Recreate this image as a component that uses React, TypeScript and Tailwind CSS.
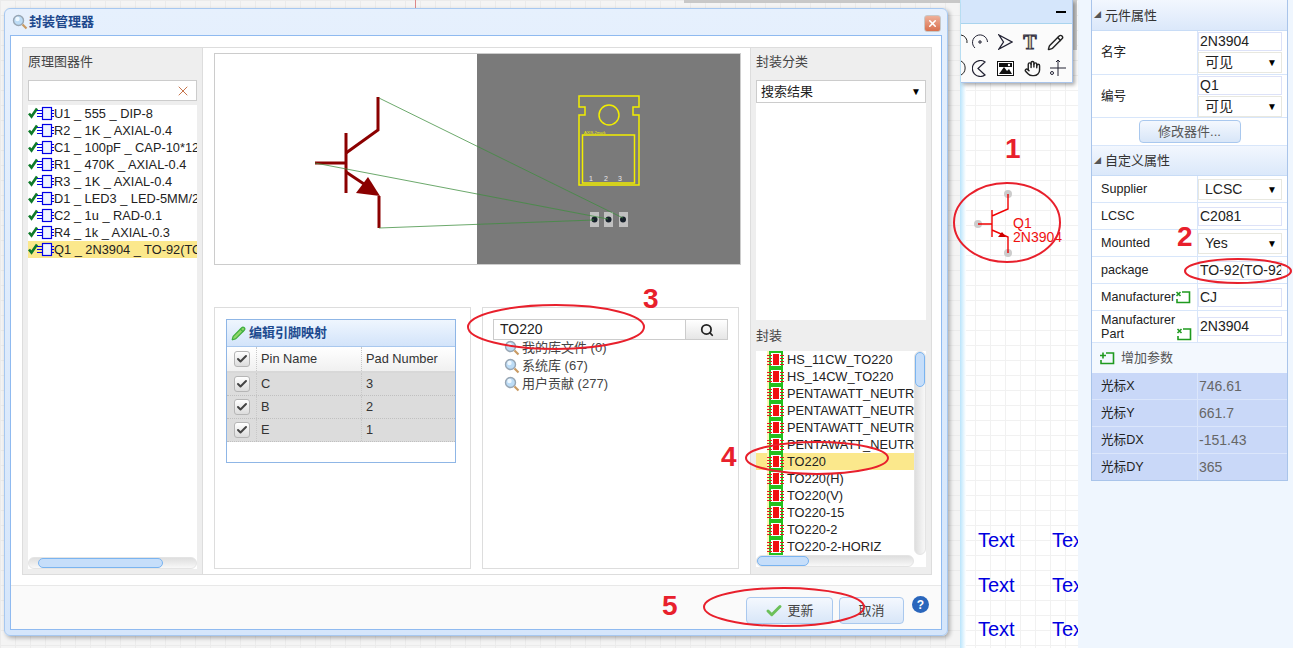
import { Check, Hand, Pencil, Search, X } from "lucide-react";
import type { ReactNode } from "react";

const parts = [
  "U1 _ 555 _ DIP-8",
  "R2 _ 1K _ AXIAL-0.4",
  "C1 _ 100pF _ CAP-10*12",
  "R1 _ 470K _ AXIAL-0.4",
  "R3 _ 1K _ AXIAL-0.4",
  "D1 _ LED3 _ LED-5MM/2",
  "C2 _ 1u _ RAD-0.1",
  "R4 _ 1k _ AXIAL-0.3",
  "Q1 _ 2N3904 _ TO-92(TO-92)",
];

const footprints = [
  "HS_11CW_TO220",
  "HS_14CW_TO220",
  "PENTAWATT_NEUTRAL",
  "PENTAWATT_NEUTRAL",
  "PENTAWATT_NEUTRAL",
  "PENTAWATT_NEUTRAL",
  "TO220",
  "TO220(H)",
  "TO220(V)",
  "TO220-15",
  "TO220-2",
  "TO220-2-HORIZ",
];

const pins = [
  ["C", "3"],
  ["B", "2"],
  ["E", "1"],
];

function PartIcon() {
  return (
    <svg width="26" height="17" viewBox="0 0 26 17" className="shrink-0">
      <path d="M1 8.5l2.5 3L9 3.5" fill="none" stroke="#0f7a2a" strokeWidth="2.6" />
      <rect x="14.5" y="2.5" width="9" height="12" fill="#eef3ff" stroke="#0000e6" strokeWidth="1.2" />
      <path d="M9 5.5h5.5M9 8.5h5.5M9 11.5h5.5M23.5 5.5H26M23.5 8.5H26M23.5 11.5H26" stroke="#0000e6" strokeWidth="1.1" />
    </svg>
  );
}

function ChipIcon() {
  return (
    <svg width="18" height="17" viewBox="0 0 18 17" className="shrink-0">
      <rect x="0" y="0" width="2" height="17" fill="#fdf6b8" />
      <rect x="2" y="0" width="14" height="17" fill="#22c01e" />
      <rect x="4" y="2" width="10" height="13" fill="#fff" />
      <rect x="6" y="3" width="6" height="11" fill="#f01010" />
      <path d="M0 4.5h5M0 7.5h5M0 10.5h5M0 13.5h5M13 4.5h4M13 7.5h4M13 10.5h4M13 13.5h4" stroke="#e02020" />
    </svg>
  );
}

function MagIcon({ size = 16 }: { size?: number }) {
  return (
    <svg width={size} height={size} viewBox="0 0 16 16" className="shrink-0">
      <circle cx="6.5" cy="6.5" r="5" fill="#bcdcf6" stroke="#98a6b4" strokeWidth="1.4" />
      <circle cx="5.5" cy="5" r="2.2" fill="#eef8ff" />
      <path d="M10.5 10.5l4 4" stroke="#c99a62" strokeWidth="2.2" />
    </svg>
  );
}

function AddIcon({ plus }: { plus?: boolean }) {
  return (
    <svg width="16" height="14" viewBox="0 0 16 14" className="shrink-0">
      <path d="M7 2h7.5v10.5H2V9" fill="none" stroke="#1f9a1f" strokeWidth="1.6" />
      {plus ? (
        <path d="M1 4.5h6M4 1.5v6" stroke="#1f9a1f" strokeWidth="1.6" />
      ) : (
        <path d="M1.5 2l4 4M5.5 2l-4 4" stroke="#1f9a1f" strokeWidth="1.6" />
      )}
    </svg>
  );
}

function HScroll({ thumb, className }: { thumb: string; className: string }) {
  return (
    <div className={`h-3 rounded-full bg-gradient-to-b from-[#dedede] to-[#f8f8f8] border border-[#e4e4e4] ${className}`}>
      <div className={`h-full rounded-full bg-[#c6defa] border border-[#7ab4f0] ${thumb}`} />
    </div>
  );
}

function Box() {
  return (
    <div className="w-4 h-4 rounded-[3px] border border-[#b5b5b5] bg-gradient-to-b from-white to-[#dcdcdc] flex items-center justify-center">
      <Check size={12} strokeWidth={4} color="#444" />
    </div>
  );
}

function PropSelect({ label }: { label: string }) {
  return (
    <div className="flex items-center justify-between h-[21px] w-[84px] border border-[#e8e8e0] bg-white pl-[6px] pr-[4px] text-[14px] text-[#222]">
      <span>{label}</span>
      <span className="text-[10px] text-black">▼</span>
    </div>
  );
}

function PropInput({ value }: { value: string }) {
  return (
    <div className="h-[19px] w-[84px] border border-[#dde2f8] bg-white pl-[1px] text-[14px] leading-[17px] text-[#222] overflow-hidden whitespace-nowrap">
      {value}
    </div>
  );
}

function Row({ h, label, children }: { h: string; label: ReactNode; children: ReactNode }) {
  return (
    <div className={`flex border-b border-[#d8e6fa] ${h}`}>
      <div className="w-[106px] border-r border-[#d8e6fa] flex items-center pl-[9px] text-[12.6px] text-[#222] shrink-0">
        {label}
      </div>
      <div className="flex flex-col justify-center gap-[1px]">{children}</div>
    </div>
  );
}

function SectionHead({ title, h }: { title: string; h: string }) {
  return (
    <div className={`flex items-center gap-[4px] pl-[2px] pt-[1px] bg-gradient-to-b from-[#f2f7fe] to-[#dbe8fa] text-[13px] text-[#333] border-b border-[#c8dcf6] ${h}`}>
      <span className="text-[7px] text-[#555]">◢</span>
      {title}
    </div>
  );
}

function PropsPanel() {
  return (
    <aside className="w-[197px] h-[481px] ml-[13px] border border-t-0 border-[#a9c4ea] bg-white shrink-0 overflow-hidden">
      <SectionHead title="元件属性" h="h-[31px]" />
      <Row h="h-[44px]" label="名字">
        <PropInput value="2N3904" />
        <PropSelect label="可见" />
      </Row>
      <Row h="h-[43px]" label="编号">
        <PropInput value="Q1" />
        <PropSelect label="可见" />
      </Row>
      <div className="h-[28px] flex items-center justify-center border-b border-[#d8e6fa]">
        <div className="w-[102px] h-[23px] rounded-[4px] border border-[#a9c8ee] bg-gradient-to-b from-[#f4f8fe] to-[#d8e6f8] flex items-center justify-center text-[13px] text-[#555]">
          修改器件...
        </div>
      </div>
      <SectionHead title="自定义属性" h="h-[30px]" />
      <Row h="h-[27px]" label="Supplier">
        <PropSelect label="LCSC" />
      </Row>
      <Row h="h-[27px]" label="LCSC">
        <PropInput value="C2081" />
      </Row>
      <Row h="h-[27px]" label="Mounted">
        <PropSelect label="Yes" />
      </Row>
      <Row h="h-[27px]" label="package">
        <PropInput value="TO-92(TO-92)" />
      </Row>
      <Row
        h="h-[27px]"
        label={
          <span className="flex items-center">
            Manufacturer
            <AddIcon />
          </span>
        }
      >
        <PropInput value="CJ" />
      </Row>
      <Row
        h="h-[32px]"
        label={
          <span className="leading-[14px] relative w-full">
            Manufacturer
            <br />
            Part
            <span className="absolute left-[75px] top-[14px]">
              <AddIcon />
            </span>
          </span>
        }
      >
        <PropInput value="2N3904" />
      </Row>
      <div className="h-[30px] flex items-center gap-[6px] pl-[7px] bg-[#f3f8fe] text-[13px] text-[#555]">
        <AddIcon plus />
        增加参数
      </div>
      {[
        ["光标X", "746.61"],
        ["光标Y", "661.7"],
        ["光标DX", "-151.43"],
        ["光标DY", "365"],
      ].map(([k, v]) => (
        <div key={k} className="h-[27px] flex bg-[#c9d8f8] border-b border-[#dbe6fb]">
          <div className="w-[106px] flex items-center pl-[9px] text-[12.6px] text-[#222] border-r border-[#dbe6fb]">{k}</div>
          <div className="flex items-center pl-[1px] text-[14px] text-[#666]">{v}</div>
        </div>
      ))}
    </aside>
  );
}

function Schematic() {
  return (
    <svg viewBox="215 54 525 210" className="w-[525px] h-[210px] block" fill="none">
      <rect x="477" y="54" width="263" height="210" fill="#7a7a7a" />
      <g stroke="#8b0000" strokeWidth="3">
        <path d="M378 97v33l-32 23" />
        <path d="M346 133v60" />
        <path d="M315 163h31" />
        <path d="M346 172l24 16" />
        <path d="M379 196v32" />
      </g>
      <path d="M368 177l-12 16 24 3z" fill="#8b0000" />
      <g fill="#c0c0c0">
        <rect x="590" y="212" width="9" height="15" />
        <rect x="604" y="212" width="9" height="15" />
        <rect x="619" y="212" width="9" height="15" />
      </g>
      <g fill="#16202a">
        <circle cx="594.5" cy="219.5" r="3" />
        <circle cx="608.5" cy="219.5" r="3" />
        <circle cx="623" cy="219.5" r="3" />
      </g>
      <g stroke="#3f8f3f" strokeWidth="0.9" opacity="0.85">
        <path d="M379 98L623 218" />
        <path d="M315 163L608 219" />
        <path d="M379 228L594 220" />
      </g>
      <g stroke="#f2ee00" strokeWidth="1.5">
        <path d="M579 96h60v11h-6v8h6v70h-60v-70h6v-8h-6z" />
        <rect x="582.5" y="135" width="52" height="48" />
        <circle cx="609" cy="115" r="10" />
      </g>
      <text x="584" y="134" fill="#f2ee00" fontSize="4" fontFamily="Liberation Sans">AXIS-2mark</text>
      <g fill="#e8e8e8" fontSize="7" fontFamily="Liberation Sans">
        <text x="589" y="181">1</text>
        <text x="604" y="181">2</text>
        <text x="618" y="181">3</text>
      </g>
    </svg>
  );
}

function PinTable() {
  return (
    <div className="w-[230px] h-[144px] mt-[11px] ml-[11px] border border-[#8fb6e6] bg-white">
      <div className="h-[27px] flex items-center gap-[3px] pl-[4px] bg-gradient-to-b from-[#eff6fe] to-[#d3e4fa] border-b border-[#a9c8ee] text-[13px] font-bold text-[#1d4a8f]">
        <Pencil size={15} color="#3fae3f" fill="#8fd66a" />
        编辑引脚映射
      </div>
      <div className="h-[26px] flex bg-gradient-to-b from-white to-[#f0f0f0] border-b-2 border-[#d8d8d8] text-[12.8px] text-[#333]">
        <div className="w-[30px] flex items-center justify-center border-r border-dotted border-[#c8c8c8]">
          <Box />
        </div>
        <div className="w-[105px] flex items-center pl-[4px] border-r border-dotted border-[#c8c8c8]">Pin Name</div>
        <div className="flex items-center pl-[4px]">Pad Number</div>
      </div>
      {pins.map(([pin, pad]) => (
        <div key={pin} className="h-[23px] flex bg-[#dcdcdc] border-b border-dotted border-[#c0c0c0] text-[12.8px] text-[#333]">
          <div className="w-[30px] flex items-center justify-center border-r border-dotted border-[#c8c8c8]">
            <Box />
          </div>
          <div className="w-[105px] flex items-center pl-[4px] border-r border-dotted border-[#c8c8c8]">{pin}</div>
          <div className="flex items-center pl-[4px]">{pad}</div>
        </div>
      ))}
    </div>
  );
}

function LibrarySearch() {
  return (
    <div className="pt-[11px] pl-[10px]">
      <div className="flex">
        <div className="w-[193px] h-[21px] border border-[#ccc] pl-[6px] text-[14px] leading-[19px] text-[#222]">TO220</div>
        <div className="w-[42px] h-[21px] border border-l-0 border-[#ccc] bg-gradient-to-b from-white to-[#e6e6e6] flex items-center justify-center">
          <Search size={14} strokeWidth={3} color="#222" />
        </div>
      </div>
      <div className="pl-[11px] -mt-[1px] text-[13px] text-[#444]">
        {["我的库文件 (0)", "系统库 (67)", "用户贡献 (277)"].map((t) => (
          <div key={t} className="h-[18px] flex items-center gap-[2px]">
            <MagIcon />
            {t}
          </div>
        ))}
      </div>
    </div>
  );
}

function Dialog() {
  return (
    <div className="absolute left-[4px] top-[8px] w-[944px] h-[628px] rounded-[6px] border border-[#a7c8f0] bg-gradient-to-b from-[#e6f0fd] to-[#d5e6fb] px-[5px] pb-[5px] shadow-[2px_2px_4px_rgba(0,0,0,0.3)] flex flex-col">
      <div className="h-[26px] shrink-0 flex items-center gap-[1px] pl-[2px] text-[13px] font-bold text-[#20488c]">
        <MagIcon size={16} />
        封装管理器
        <div className="ml-auto mr-[1px] mt-[2px] w-[17px] h-[17px] rounded-[3px] bg-gradient-to-b from-[#eeb09a] to-[#d8704e] border border-[#c8c8c8] flex items-center justify-center">
          <X size={11} strokeWidth={3.5} color="#fff" />
        </div>
      </div>
      <div className="flex-1 border border-[#8fbaf0] bg-white flex flex-col min-h-0">
        <div className="h-[528px] mt-[11px] ml-[11px] flex shrink-0 text-[12.8px] text-[#222]">
          <section className="w-[181px] shrink-0 bg-[#eeeeee] border border-[#dddddd] px-[5px] flex flex-col">
            <h2 className="h-[32px] pb-[4px] flex items-center text-[13px] text-[#444]">原理图器件</h2>
            <div className="h-[21px] w-[169px] bg-white border border-[#ccc] flex items-center justify-end pr-[5px] shrink-0">
              <X size={16} strokeWidth={1.2} color="#b8501e" />
            </div>
            <div className="w-[169px] flex-1 mt-[4px] mb-[5px] bg-white overflow-hidden flex flex-col min-h-0">
              <div className="flex-1 overflow-hidden">
                {parts.map((p) => (
                  <div
                    key={p}
                    className={`h-[17px] flex items-center overflow-hidden whitespace-nowrap ${p.startsWith("Q1") ? "bg-[#fbe88c]" : ""}`}
                  >
                    <PartIcon />
                    <span>{p}</span>
                  </div>
                ))}
              </div>
              <HScroll className="w-[169px] shrink-0" thumb="w-[125px] ml-[9px]" />
            </div>
          </section>
          <section className="w-[547px] shrink-0 border-y border-[#dddddd] pl-[11px] pt-[5px]">
            <div className="w-[527px] h-[212px] border border-[#cccccc]">
              <Schematic />
            </div>
            <div className="flex gap-[11px] mt-[42px]">
              <div className="w-[257px] h-[262px] border border-[#dddddd]">
                <PinTable />
              </div>
              <div className="w-[257px] h-[262px] border border-[#dddddd]">
                <LibrarySearch />
              </div>
            </div>
          </section>
          <section className="w-[182px] shrink-0 bg-[#eeeeee] border border-[#dddddd] px-[5px] flex flex-col">
            <h2 className="h-[32px] pb-[4px] flex items-center text-[13px] text-[#444]">封装分类</h2>
            <div className="h-[23px] w-[170px] bg-white border border-[#ccc] flex items-center justify-between px-[4px] text-[13px] shrink-0">
              <span>搜索结果</span>
              <span className="text-[10px] text-black">▼</span>
            </div>
            <div className="h-[217px] w-[170px] bg-white shrink-0" />
            <h2 className="h-[31px] flex items-center text-[13px] text-[#444]">封装</h2>
            <div className="w-[170px] h-[216px] bg-white flex flex-col">
              <div className="flex flex-1 min-h-0">
                <div className="w-[158px] overflow-hidden">
                  {footprints.map((f, i) => (
                    <div
                      key={f + i}
                      className={`h-[17px] flex items-center gap-[2px] pl-[11px] whitespace-nowrap ${f === "TO220" ? "bg-[#fbe88c]" : ""}`}
                    >
                      <ChipIcon />
                      <span>{f}</span>
                    </div>
                  ))}
                </div>
                <div className="w-[12px] rounded-full bg-gradient-to-r from-[#dedede] to-[#f8f8f8] border border-[#e4e4e4]">
                  <div className="h-[35px] rounded-full bg-[#c6defa] border border-[#7ab4f0]" />
                </div>
              </div>
              <HScroll className="w-[158px] shrink-0" thumb="w-[52px]" />
            </div>
          </section>
        </div>
        <footer className="mt-[10px] flex-1 bg-[#fafafa] border-t border-[#e8e8e8] flex items-start pt-[11px] pl-[735px] text-[13px] text-[#444]">
          <div className="w-[87px] h-[27px] rounded-[4px] border border-[#a9c8ee] bg-gradient-to-b from-[#f4f8fe] to-[#d8e6f8] flex items-center justify-center gap-[4px]">
            <Check size={18} strokeWidth={4} color="#6cc05a" />
            更新
          </div>
          <div className="w-[65px] h-[27px] ml-[6px] rounded-[4px] border border-[#a9c8ee] bg-gradient-to-b from-[#f4f8fe] to-[#d8e6f8] flex items-center justify-center">
            取消
          </div>
          <div className="w-[17px] h-[17px] ml-[8px] -mt-[1px] rounded-full bg-[#2a66bc] text-white font-bold text-[12px] flex items-center justify-center">
            ?
          </div>
        </footer>
      </div>
    </div>
  );
}

function Toolbar() {
  return (
    <div className="absolute left-[961px] top-0 w-[112px] h-[83px] bg-[#fbfbfb] border-r border-b border-[#a9c4ea] shadow-[2px_2px_4px_rgba(0,0,0,0.35)]">
      <div className="h-[24px] bg-[#d5e6fb] border-b border-[#a9d4ee] flex items-center justify-end pr-[6px]">
        <div className="w-[10px] h-[2px] bg-black" />
      </div>
      <div className="flex items-center gap-[10px] h-[26px] mt-[5px]">
        <svg width="7" height="16" viewBox="0 0 7 16" fill="none" stroke="#222" className="-mr-[6px]"><path d="M0 1a7 7 0 0 1 6 8" /></svg>
        <svg width="16" height="16" viewBox="0 0 16 16" fill="none" stroke="#223"><path d="M3 14A7.5 7.5 0 1 1 15.5 8" /><path d="M6 8h4M8 6v4" /></svg>
        <svg width="15" height="16" viewBox="0 0 15 16" fill="none" stroke="#223" strokeWidth="1.3"><path d="M1 1l13 7-13 7 4.5-7z" /></svg>
        <span className="w-[14px] text-center text-[20px] leading-none font-bold font-['Liberation_Serif'] text-[#d8c8a0] [-webkit-text-stroke:1px_#334]">T</span>
        <Pencil size={17} color="#222" />
      </div>
      <div className="flex items-center gap-[10px] h-[26px]">
        <svg width="6" height="16" viewBox="0 0 6 16" fill="none" stroke="#222" className="-mr-[5px]"><path d="M0 1a8 8 0 0 1 0 14" /></svg>
        <svg width="16" height="17" viewBox="0 0 16 17" fill="none" stroke="#223" strokeWidth="1.2"><path d="M13 2A8 8 0 1 0 13 15L6 8.5z" /></svg>
        <svg width="17" height="15" viewBox="0 0 17 15" className="-ml-[1px]"><rect x="0.5" y="0.5" width="16" height="14" fill="#fff" stroke="#111" /><path d="M2 13l5-7 3 4 2-2 3 5z" fill="#111" /><rect x="2" y="2" width="13" height="4" fill="#111" /><circle cx="12" cy="4" r="1.2" fill="#fff" /></svg>
        <Hand size={17} color="#222" />
        <svg width="18" height="18" viewBox="0 0 18 18" fill="none" stroke="#223" className="-ml-[2px]"><path d="M9 1v16M1 9h16M7 3l2-2 2 2" /><circle cx="3" cy="14" r="1.5" /></svg>
      </div>
    </div>
  );
}

function Sheet() {
  return (
    <div className="relative w-[1078px] h-full shrink-0 bg-[#f4f4f4]">
      <div className="absolute left-[960px] top-0 bottom-0 w-[118px] bg-white bg-[linear-gradient(#f1f1f1_1px,transparent_1px),linear-gradient(90deg,#f1f1f1_1px,transparent_1px)] bg-[size:15px_15px]" />
      <div className="absolute inset-0 right-[118px] bg-[linear-gradient(#ebebeb_1px,transparent_1px),linear-gradient(90deg,#ebebeb_1px,transparent_1px)] bg-[size:15px_15px]" />
      <div className="absolute left-[960px] top-0 bottom-0 w-[6px] bg-gradient-to-r from-[#b9e4fb] to-white" />
      <div className="absolute left-[415px] top-0 w-[1px] h-[8px] bg-[#d88]" />
      <div className="absolute left-[684px] top-0 w-[276px] h-[3px] bg-[#c8c8c8]" />
      <div className="absolute left-[1073px] top-0 w-[4px] h-[50px] bg-[#cfcfcf]" />
      <Toolbar />
      <svg className="absolute left-[970px] top-[185px]" width="70" height="75" viewBox="970 185 70 75" fill="none">
        <circle cx="978" cy="224" r="4" fill="#ccc" />
        <circle cx="1008" cy="194" r="4" fill="#ccc" />
        <circle cx="1008" cy="253" r="4" fill="#ccc" />
        <g stroke="#f00000" strokeWidth="1.4">
          <path d="M978 224h14M992 210v27M992 216l16-7v-15M992 230l16 7v16" />
        </g>
        <path d="M1002 232l-4 5h8z" fill="#cc0000" />
      </svg>
      <div className="absolute left-[1013px] top-[216px] text-[14px] leading-[14px] text-[#f01010] font-['Liberation_Sans']">
        Q1
        <br />
        2N3904
      </div>
      {[540, 585, 629].map((y) => (
        <div key={y}>
          <span className="absolute left-[978px] text-[20px] leading-none -translate-y-1/2 text-[#0000e0]" style={{ top: y }}>Text</span>
          <span className="absolute left-[1052px] w-[26px] overflow-hidden text-[20px] leading-none -translate-y-1/2 text-[#0000e0]" style={{ top: y }}>Text</span>
        </div>
      ))}
    </div>
  );
}

function Annotations() {
  return (
    <>
      <svg className="absolute inset-0 pointer-events-none" width="1293" height="648" fill="none" stroke="#e8202c" strokeWidth="2">
        <ellipse cx="1007" cy="222.5" rx="53" ry="39.5" />
        <ellipse cx="1238" cy="271" rx="53" ry="12" />
        <ellipse cx="556" cy="327" rx="88" ry="22" />
        <ellipse cx="817" cy="458" rx="71" ry="16" />
        <ellipse cx="784" cy="607" rx="80" ry="19" />
      </svg>
      {[
        ["1", "left-[1005px] top-[134px]"],
        ["2", "left-[1177px] top-[222px]"],
        ["3", "left-[643px] top-[284px]"],
        ["4", "left-[721px] top-[442px]"],
        ["5", "left-[662px] top-[591px]"],
      ].map(([n, pos]) => (
        <span key={n} className={`absolute ${pos} text-[28px] leading-[30px] font-bold text-[#e8202c]`}>
          {n}
        </span>
      ))}
    </>
  );
}

export default function App() {
  return (
    <div className="relative w-[1293px] h-[648px] overflow-hidden flex bg-[#eff6fe] font-['Liberation_Sans','Noto_Sans_CJK_SC',sans-serif]">
      <Sheet />
      <PropsPanel />
      <Dialog />
      <Annotations />
    </div>
  );
}
